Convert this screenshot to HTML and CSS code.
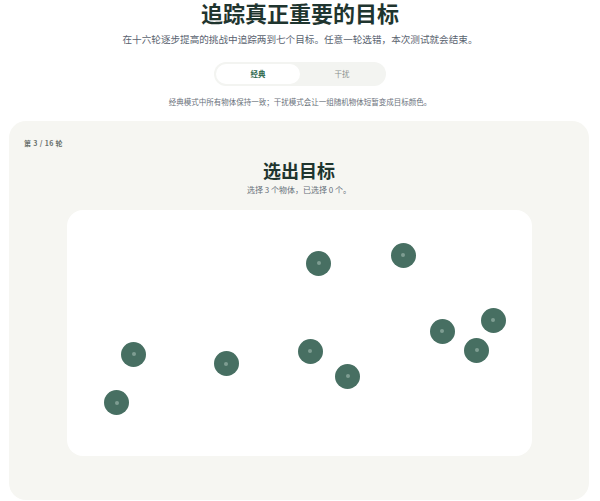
FILE: index.html
```html
<!DOCTYPE html>
<html lang="zh-CN">
<head>
<meta charset="utf-8">
<title>追踪真正重要的目标</title>
<link rel="stylesheet" href="styles.css">
</head>
<body>
<main class="page">
  <header class="intro">
    <h1 class="title">追踪真正重要的目标</h1>
    <p class="subtitle">在十六轮逐步提高的挑战中追踪两到七个目标。任意一轮选错，本次测试就会结束。</p>
    <div class="toggle">
      <button class="toggle-btn is-active">经典</button>
      <button class="toggle-btn">干扰</button>
    </div>
    <p class="note">经典模式中所有物体保持一致；干扰模式会让一组随机物体短暂变成目标颜色。</p>
  </header>
  <section class="card">
    <div class="round">第 3 / 16 轮</div>
    <div class="prompt">
      <h2 class="prompt-title">选出目标</h2>
      <p class="prompt-sub">选择 3 个物体，已选择 0 个。</p>
    </div>
    <div class="arena">
      <span class="obj" style="left:239.5px;top:41px"></span>
      <span class="obj" style="left:324px;top:33px"></span>
      <span class="obj" style="left:363.2px;top:109.3px"></span>
      <span class="obj" style="left:414.2px;top:98px"></span>
      <span class="obj" style="left:397.5px;top:128.3px"></span>
      <span class="obj" style="left:54.8px;top:132.3px"></span>
      <span class="obj" style="left:147.2px;top:141.7px"></span>
      <span class="obj" style="left:231.2px;top:129px"></span>
      <span class="obj" style="left:268.5px;top:154.3px"></span>
      <span class="obj" style="left:37.8px;top:180.7px"></span>
    </div>
  </section>
</main>
</body>
</html>
```

FILE: styles.css
```css
* { box-sizing: border-box; }
html, body { margin: 0; padding: 0; background: #ffffff; }
body {
  font-family: "Noto Sans CJK SC", "Noto Sans", sans-serif;
  color: #20352f;
}
.page { width: 600px; }
.intro {
  display: flex;
  flex-direction: column;
  align-items: center;
}
.title {
  margin: 0;
  font-size: 22px;
  line-height: 25px;
  font-weight: 700;
  color: #1f352f;
}
.subtitle {
  margin: 6.5px 0 0;
  font-size: 9.6px;
  line-height: 14px;
  color: #5a6370;
}
.toggle {
  margin-top: 16.5px;
  width: 172px;
  height: 24px;
  padding: 2px;
  border-radius: 12px;
  background: #f3f4f1;
  display: grid;
  grid-template-columns: 1fr 1fr;
}
.toggle-btn {
  border: 0;
  background: transparent;
  border-radius: 10px;
  font-family: inherit;
  font-size: 7.5px;
  line-height: 20px;
  padding: 0;
  color: #8b918e;
}
.toggle-btn.is-active {
  background: #ffffff;
  color: #2f6a4f;
  font-weight: 700;
}
.note {
  margin: 10px 0 0;
  font-size: 7.5px;
  line-height: 12px;
  color: #6a717b;
}
.card {
  margin: 13px 0 0 9px;
  width: 580px;
  background: #f6f6f2;
  border-radius: 17px;
  padding: 16px 15px 44px;
}
.round {
  font-size: 7px;
  line-height: 12px;
  font-weight: 700;
  color: #6a716d;
  letter-spacing: 0.35px;
}
.prompt {
  margin-top: 9px;
  text-align: center;
}
.prompt-title {
  margin: 0;
  font-size: 18px;
  line-height: 24px;
  font-weight: 700;
  color: #1f352f;
}
.prompt-sub {
  margin: 2px 0 0;
  font-size: 8px;
  line-height: 12px;
  color: #66707a;
}
.arena {
  position: relative;
  margin: 13.5px auto 0;
  width: 465px;
  height: 246.5px;
  background: #ffffff;
  border-radius: 16px;
}
.obj {
  position: absolute;
  width: 25px;
  height: 25px;
  border-radius: 50%;
  background: #476f62;
}
.obj::after {
  content: "";
  position: absolute;
  left: 10.5px;
  top: 10.5px;
  width: 4px;
  height: 4px;
  border-radius: 50%;
  background: #7e9d92;
}
```
